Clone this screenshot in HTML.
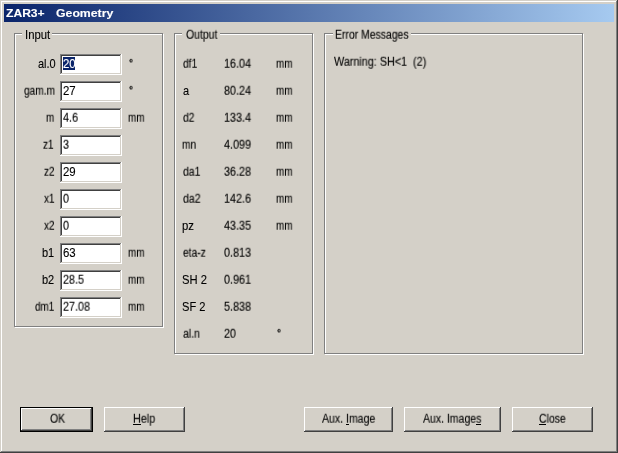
<!DOCTYPE html>
<html><head><meta charset="utf-8"><title>ZAR3+ Geometry</title>
<style>
html,body{margin:0;padding:0;}
body{width:618px;height:453px;overflow:hidden;background:#d4d0c8;font-family:"Liberation Sans",sans-serif;font-size:11px;color:#000;position:relative;}
div,span,i{box-sizing:border-box;}
.n{position:absolute;}
.n>.n{left:0;top:0;}
.n>.n>.n{left:1px;top:1px;}
.n>.n>.n>.n{left:0;top:0;}
.n>.n>.n>.n>.n{left:1px;top:1px;}
.c4{background:#404040;}.c8{background:#808080;}.cf{background:#fff;}.cd{background:#d4d0c8;}
.title{position:absolute;left:4px;top:4px;width:610px;height:18px;background:linear-gradient(to right,#0a246a,#a6caf0);}
.gb{position:absolute;border:1px solid #808080;box-shadow:1px 1px 0 #fff, inset 1px 1px 0 #fff;}
.gap{position:absolute;top:33px;height:2px;background:#d4d0c8;}
.x{position:absolute;white-space:pre;line-height:13px;height:13px;transform-origin:0 10px;will-change:transform;-webkit-text-stroke:0.1px currentColor;}
.w{color:#fff;font-weight:bold;}
u{text-decoration:none;}
.ul{position:absolute;top:424px;height:1px;background:#000;}
.sel{position:absolute;left:63px;top:57px;width:12px;height:13px;background:#0a246a;}
.def{position:absolute;left:20px;top:407px;width:73px;height:25px;border:1px solid #000;}
</style></head><body>
<div class="n c4" style="left:0px;top:0px;width:618px;height:453px;"><div class="n cd" style="width:617px;height:452px;"><div class="n c8" style="width:616px;height:451px;"><div class="n cf" style="width:615px;height:450px;"><div class="n cd" style="width:614px;height:449px;"></div></div></div></div></div>
<div class="title"></div>
<div class="gb" style="left:14px;top:33px;width:149px;height:294px;"></div>
<div class="gb" style="left:174px;top:33px;width:139px;height:321px;"></div>
<div class="gb" style="left:324px;top:33px;width:259px;height:321px;"></div>
<div class="gap" style="left:22px;width:30px;"></div>
<div class="gap" style="left:182px;width:38px;"></div>
<div class="gap" style="left:333px;width:78px;"></div>
<div class="n cf" style="left:60px;top:54px;width:62px;height:21px;"><div class="n c8" style="width:61px;height:20px;"><div class="n cd" style="width:60px;height:19px;"><div class="n c4" style="width:59px;height:18px;"><div class="n cf" style="width:58px;height:17px;"></div></div></div></div></div>
<div class="n cf" style="left:60px;top:81px;width:62px;height:21px;"><div class="n c8" style="width:61px;height:20px;"><div class="n cd" style="width:60px;height:19px;"><div class="n c4" style="width:59px;height:18px;"><div class="n cf" style="width:58px;height:17px;"></div></div></div></div></div>
<div class="n cf" style="left:60px;top:108px;width:62px;height:21px;"><div class="n c8" style="width:61px;height:20px;"><div class="n cd" style="width:60px;height:19px;"><div class="n c4" style="width:59px;height:18px;"><div class="n cf" style="width:58px;height:17px;"></div></div></div></div></div>
<div class="n cf" style="left:60px;top:135px;width:62px;height:21px;"><div class="n c8" style="width:61px;height:20px;"><div class="n cd" style="width:60px;height:19px;"><div class="n c4" style="width:59px;height:18px;"><div class="n cf" style="width:58px;height:17px;"></div></div></div></div></div>
<div class="n cf" style="left:60px;top:162px;width:62px;height:21px;"><div class="n c8" style="width:61px;height:20px;"><div class="n cd" style="width:60px;height:19px;"><div class="n c4" style="width:59px;height:18px;"><div class="n cf" style="width:58px;height:17px;"></div></div></div></div></div>
<div class="n cf" style="left:60px;top:189px;width:62px;height:21px;"><div class="n c8" style="width:61px;height:20px;"><div class="n cd" style="width:60px;height:19px;"><div class="n c4" style="width:59px;height:18px;"><div class="n cf" style="width:58px;height:17px;"></div></div></div></div></div>
<div class="n cf" style="left:60px;top:216px;width:62px;height:21px;"><div class="n c8" style="width:61px;height:20px;"><div class="n cd" style="width:60px;height:19px;"><div class="n c4" style="width:59px;height:18px;"><div class="n cf" style="width:58px;height:17px;"></div></div></div></div></div>
<div class="n cf" style="left:60px;top:243px;width:62px;height:21px;"><div class="n c8" style="width:61px;height:20px;"><div class="n cd" style="width:60px;height:19px;"><div class="n c4" style="width:59px;height:18px;"><div class="n cf" style="width:58px;height:17px;"></div></div></div></div></div>
<div class="n cf" style="left:60px;top:270px;width:62px;height:21px;"><div class="n c8" style="width:61px;height:20px;"><div class="n cd" style="width:60px;height:19px;"><div class="n c4" style="width:59px;height:18px;"><div class="n cf" style="width:58px;height:17px;"></div></div></div></div></div>
<div class="n cf" style="left:60px;top:297px;width:62px;height:21px;"><div class="n c8" style="width:61px;height:20px;"><div class="n cd" style="width:60px;height:19px;"><div class="n c4" style="width:59px;height:18px;"><div class="n cf" style="width:58px;height:17px;"></div></div></div></div></div>
<div class="sel"></div>
<div class="def"></div>
<div class="n c4" style="left:21px;top:408px;width:71px;height:23px;"><div class="n cf" style="width:70px;height:22px;"><div class="n c8" style="width:69px;height:21px;"><div class="n cd" style="width:68px;height:20px;"></div></div></div></div>
<div class="n c4" style="left:104px;top:407px;width:81px;height:25px;"><div class="n cf" style="width:80px;height:24px;"><div class="n c8" style="width:79px;height:23px;"><div class="n cd" style="width:78px;height:22px;"></div></div></div></div>
<div class="n c4" style="left:304px;top:407px;width:89px;height:25px;"><div class="n cf" style="width:88px;height:24px;"><div class="n c8" style="width:87px;height:23px;"><div class="n cd" style="width:86px;height:22px;"></div></div></div></div>
<div class="n c4" style="left:404px;top:407px;width:97px;height:25px;"><div class="n cf" style="width:96px;height:24px;"><div class="n c8" style="width:95px;height:23px;"><div class="n cd" style="width:94px;height:22px;"></div></div></div></div>
<div class="n c4" style="left:512px;top:407px;width:81px;height:25px;"><div class="n cf" style="width:80px;height:24px;"><div class="n c8" style="width:79px;height:23px;"><div class="n cd" style="width:78px;height:22px;"></div></div></div></div>
<span class="x w" style="left:6.00px;top:7px;transform:scale(1.100,1.0);">ZAR3+</span>
<span class="x w" style="left:56.00px;top:7px;transform:scale(1.116,1.0);">Geometry</span>
<span class="x" style="left:25.00px;top:29px;transform:scale(1.030,1.13);">Input</span>
<span class="x" style="left:186.00px;top:29px;transform:scale(0.950,1.13);">Output</span>
<span class="x" style="left:335.00px;top:29px;transform:scale(0.947,1.13);">Error Messages</span>
<span class="x" style="left:38.00px;top:58px;transform:scale(1.000,1.13);">al.0</span>
<span class="x" style="left:24.00px;top:85px;transform:scale(0.920,1.13);">gam.m</span>
<span class="x" style="left:46.00px;top:112px;transform:scale(0.900,1.13);">m</span>
<span class="x" style="left:43.00px;top:139px;transform:scale(0.900,1.13);">z1</span>
<span class="x" style="left:44.00px;top:166px;transform:scale(0.900,1.13);">z2</span>
<span class="x" style="left:44.00px;top:193px;transform:scale(0.900,1.13);">x1</span>
<span class="x" style="left:44.00px;top:220px;transform:scale(0.900,1.13);">x2</span>
<span class="x" style="left:42.00px;top:247px;transform:scale(1.000,1.13);">b1</span>
<span class="x" style="left:42.00px;top:274px;transform:scale(1.000,1.13);">b2</span>
<span class="x" style="left:35.00px;top:301px;transform:scale(0.900,1.13);">dm1</span>
<span class="x" style="left:63.00px;top:58px;transform:scale(1.040,1.13);color:#fff;">20</span>
<span class="x" style="left:63.00px;top:85px;transform:scale(1.040,1.13);">27</span>
<span class="x" style="left:63.00px;top:112px;transform:scale(0.980,1.13);">4.6</span>
<span class="x" style="left:63.00px;top:139px;transform:scale(0.980,1.13);">3</span>
<span class="x" style="left:63.00px;top:166px;transform:scale(1.040,1.13);">29</span>
<span class="x" style="left:63.00px;top:193px;transform:scale(0.980,1.13);">0</span>
<span class="x" style="left:63.00px;top:220px;transform:scale(0.980,1.13);">0</span>
<span class="x" style="left:63.00px;top:247px;transform:scale(1.040,1.13);">63</span>
<span class="x" style="left:63.00px;top:274px;transform:scale(0.980,1.13);">28.5</span>
<span class="x" style="left:63.00px;top:301px;transform:scale(0.980,1.13);">27.08</span>
<span class="x" style="left:129.00px;top:56px;transform:scale(0.900,0.9);-webkit-text-stroke:0.35px #000;">°</span>
<span class="x" style="left:129.00px;top:83px;transform:scale(0.900,0.9);-webkit-text-stroke:0.35px #000;">°</span>
<span class="x" style="left:128.00px;top:112px;transform:scale(0.900,1.13);">mm</span>
<span class="x" style="left:128.00px;top:247px;transform:scale(0.900,1.13);">mm</span>
<span class="x" style="left:128.00px;top:274px;transform:scale(0.900,1.13);">mm</span>
<span class="x" style="left:128.00px;top:301px;transform:scale(0.900,1.13);">mm</span>
<span class="x" style="left:183.00px;top:58px;transform:scale(0.930,1.13);">df1</span>
<span class="x" style="left:224.00px;top:58px;transform:scale(0.980,1.13);">16.04</span>
<span class="x" style="left:276.00px;top:58px;transform:scale(0.900,1.13);">mm</span>
<span class="x" style="left:183.00px;top:85px;transform:scale(1.000,1.13);">a</span>
<span class="x" style="left:224.00px;top:85px;transform:scale(0.980,1.13);">80.24</span>
<span class="x" style="left:276.00px;top:85px;transform:scale(0.900,1.13);">mm</span>
<span class="x" style="left:183.00px;top:112px;transform:scale(0.940,1.13);">d2</span>
<span class="x" style="left:224.00px;top:112px;transform:scale(0.980,1.13);">133.4</span>
<span class="x" style="left:276.00px;top:112px;transform:scale(0.900,1.13);">mm</span>
<span class="x" style="left:182.00px;top:139px;transform:scale(0.920,1.13);">mn</span>
<span class="x" style="left:224.00px;top:139px;transform:scale(0.980,1.13);">4.099</span>
<span class="x" style="left:276.00px;top:139px;transform:scale(0.900,1.13);">mm</span>
<span class="x" style="left:183.00px;top:166px;transform:scale(0.950,1.13);">da1</span>
<span class="x" style="left:224.00px;top:166px;transform:scale(0.980,1.13);">36.28</span>
<span class="x" style="left:276.00px;top:166px;transform:scale(0.900,1.13);">mm</span>
<span class="x" style="left:183.00px;top:193px;transform:scale(0.960,1.13);">da2</span>
<span class="x" style="left:224.00px;top:193px;transform:scale(0.980,1.13);">142.6</span>
<span class="x" style="left:276.00px;top:193px;transform:scale(0.900,1.13);">mm</span>
<span class="x" style="left:182.00px;top:220px;transform:scale(1.030,1.13);">pz</span>
<span class="x" style="left:224.00px;top:220px;transform:scale(0.980,1.13);">43.35</span>
<span class="x" style="left:276.00px;top:220px;transform:scale(0.900,1.13);">mm</span>
<span class="x" style="left:183.00px;top:247px;transform:scale(0.930,1.13);">eta-z</span>
<span class="x" style="left:224.00px;top:247px;transform:scale(0.980,1.13);">0.813</span>
<span class="x" style="left:182.00px;top:274px;transform:scale(1.020,1.13);">SH 2</span>
<span class="x" style="left:224.00px;top:274px;transform:scale(0.980,1.13);">0.961</span>
<span class="x" style="left:182.00px;top:301px;transform:scale(1.010,1.13);">SF 2</span>
<span class="x" style="left:224.00px;top:301px;transform:scale(0.980,1.13);">5.838</span>
<span class="x" style="left:183.00px;top:328px;transform:scale(0.960,1.13);">al.n</span>
<span class="x" style="left:224.00px;top:328px;transform:scale(0.980,1.13);">20</span>
<span class="x" style="left:277.00px;top:326px;transform:scale(0.900,0.9);-webkit-text-stroke:0.35px #000;">°</span>
<span class="x" style="left:334.00px;top:56px;transform:scale(0.981,1.13);">Warning: SH&lt;1  (2)</span>
<span class="x" style="left:50.00px;top:413px;transform:scale(0.950,1.13);">OK</span>
<span class="x" style="left:133.00px;top:413px;transform:scale(0.980,1.13);"><u>H</u>elp</span>
<span class="x" style="left:322.00px;top:413px;transform:scale(0.957,1.13);">Aux. <u>I</u>mage</span>
<span class="x" style="left:423.00px;top:413px;transform:scale(0.954,1.13);">Aux. Image<u>s</u></span>
<span class="x" style="left:539.00px;top:413px;transform:scale(0.950,1.13);"><u>C</u>lose</span>
<div class="ul" style="left:133px;width:8px;"></div>
<div class="ul" style="left:346px;width:3px;"></div>
<div class="ul" style="left:476px;width:5px;"></div>
<div class="ul" style="left:539px;width:7px;"></div>
</body></html>
